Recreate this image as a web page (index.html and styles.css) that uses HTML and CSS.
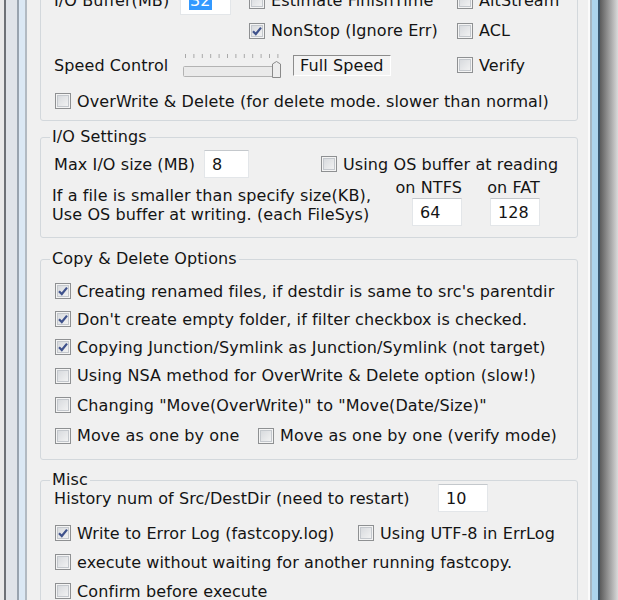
FILE: index.html
```html
<!DOCTYPE html>
<html lang="en">
<head>
<meta charset="utf-8">
<title>FastCopy Settings</title>
<link rel="stylesheet" href="styles.css">
</head>
<body>
<div class="window">
  <div class="frame-left"></div>
  <main class="client">
    <section class="group group-top">
      <div class="buf-cell"><span class="buf-label">I/O Buffer(MB)</span><span class="edit edit-buf"><span class="sel">32</span></span></div>
      <label class="chk"><span class="box"></span>Estimate FinishTime</label>
      <label class="chk"><span class="box"></span>AltStream</label>
      <span class="empty"></span>
      <label class="chk"><span class="box on"><svg viewBox="0 0 14 14"><path d="M3 7.2 L5.8 10 L11 3.6"/></svg></span>NonStop (Ignore Err)</label>
      <label class="chk"><span class="box"></span>ACL</label>
      <div class="speed-cell">
        <span class="speed-label">Speed Control</span>
        <svg class="slider" width="100" height="27" viewBox="0 0 100 27">
          <g class="ticks">
            <line x1="2.5" y1="2" x2="2.5" y2="6"/><line x1="10.9" y1="2" x2="10.9" y2="6"/>
            <line x1="19.3" y1="2" x2="19.3" y2="6"/><line x1="27.7" y1="2" x2="27.7" y2="6"/>
            <line x1="36.1" y1="2" x2="36.1" y2="6"/><line x1="44.5" y1="2" x2="44.5" y2="6"/>
            <line x1="52.9" y1="2" x2="52.9" y2="6"/><line x1="61.3" y1="2" x2="61.3" y2="6"/>
            <line x1="69.7" y1="2" x2="69.7" y2="6"/><line x1="78.1" y1="2" x2="78.1" y2="6"/>
            <line x1="86.5" y1="2" x2="86.5" y2="6"/><line x1="94.9" y1="2" x2="94.9" y2="6"/>
          </g>
          <rect class="track" x="0.5" y="14.5" width="92" height="10" rx="1"/>
          <path class="thumb" d="M89.5 12 L93.5 9.5 L97.5 12 V25.5 H89.5 Z"/>
        </svg>
        <span class="static">Full Speed</span>
      </div>
      <label class="chk"><span class="box"></span>Verify</label>
      <label class="chk span-all"><span class="box"></span>OverWrite &amp; Delete (for delete mode. slower than normal)</label>
    </section>

    <section class="group group-io">
      <div class="group-title">I/O Settings</div>
      <div class="row io-row1">
        <span class="io-label">Max I/O size (MB)</span>
        <span class="edit edit-io">8</span>
        <label class="chk io-osbuf"><span class="box"></span>Using OS buffer at reading</label>
      </div>
      <div class="row io-row2">
        <p class="io-text">If a file is smaller than specify size(KB),<br>Use OS buffer at writing. (each FileSys)</p>
        <div class="fs-cols">
          <div class="fs-col fs-ntfs"><span class="fs-head">on NTFS</span><span class="edit edit-fs">64</span></div>
          <div class="fs-col fs-fat"><span class="fs-head">on FAT</span><span class="edit edit-fs">128</span></div>
        </div>
      </div>
    </section>

    <section class="group group-cd">
      <div class="group-title">Copy &amp; Delete Options</div>
      <div class="cd-rows">
        <label class="chk"><span class="box on"><svg viewBox="0 0 14 14"><path d="M3 7.2 L5.8 10 L11 3.6"/></svg></span>Creating renamed files, if destdir is same to src's parentdir</label>
        <label class="chk"><span class="box on"><svg viewBox="0 0 14 14"><path d="M3 7.2 L5.8 10 L11 3.6"/></svg></span>Don't create empty folder, if filter checkbox is checked.</label>
        <label class="chk"><span class="box on"><svg viewBox="0 0 14 14"><path d="M3 7.2 L5.8 10 L11 3.6"/></svg></span>Copying Junction/Symlink as Junction/Symlink (not target)</label>
        <label class="chk"><span class="box"></span>Using NSA method for OverWrite &amp; Delete option (slow!)</label>
        <label class="chk"><span class="box"></span>Changing "Move(OverWrite)" to "Move(Date/Size)"</label>
        <div class="row">
          <label class="chk cd-move"><span class="box"></span>Move as one by one</label>
          <label class="chk"><span class="box"></span>Move as one by one (verify mode)</label>
        </div>
      </div>
    </section>

    <section class="group group-misc">
      <div class="group-title">Misc</div>
      <div class="row misc-row1">
        <span class="misc-label">History num of Src/DestDir (need to restart)</span>
        <span class="edit edit-fs">10</span>
      </div>
      <div class="row misc-row misc-row2">
        <label class="chk misc-log"><span class="box on"><svg viewBox="0 0 14 14"><path d="M3 7.2 L5.8 10 L11 3.6"/></svg></span>Write to Error Log (fastcopy.log)</label>
        <label class="chk"><span class="box"></span>Using UTF-8 in ErrLog</label>
      </div>
      <div class="row misc-row">
        <label class="chk"><span class="box"></span>execute without waiting for another running fastcopy.</label>
      </div>
      <div class="row misc-row">
        <label class="chk"><span class="box"></span>Confirm before execute</label>
      </div>
    </section>
  </main>
  <div class="frame-right"></div>
</div>
</body>
</html>
```

FILE: styles.css
```css
* { box-sizing: border-box; }
html, body { margin: 0; padding: 0; }
body {
  width: 618px;
  height: 600px;
  overflow: hidden;
  background: #e9e9e9;
  font-family: "DejaVu Sans", Verdana, sans-serif;
  font-size: 16px;
  letter-spacing: 0.1px;
  color: #141414;
}
.window { display: flex; height: 600px; }
.frame-left {
  width: 27px;
  flex: none;
  background: linear-gradient(to right,
    #e9e9e9 0 4px, #6d7176 4px 6px, #dfe3e8 6px 17px, #98a3ae 17px 19px,
    #dbe8f4 19px 25px, #b2bac2 25px 27px);
}
.client {
  width: 561px;
  flex: none;
  background: #f0f0f0;
  overflow: hidden;
}
.frame-right {
  width: 30px;
  flex: none;
  background: linear-gradient(to right,
    #fbfbfb 0 2px, #a7b5c2 2px 4px, #acd3ee 4px 10px, #3a5670 10px 12px,
    #5c5c5c 12px, #dadada 30px);
}

/* group boxes */
.group {
  margin: 0 10px 0 13px;
  border: 1px solid #d3d8dc;
  border-radius: 3px;
  padding: 0 12px 8px 13px;
}
.group-title {
  width: fit-content;
  margin: -10px 0 0 -4px;
  padding: 0 2px;
  height: 18px;
  line-height: 18px;
  background: #f0f0f0;
}
.row { display: flex; align-items: center; }

/* checkboxes */
.chk { display: flex; align-items: center; gap: 6px; white-space: nowrap; }
.box {
  width: 16px;
  height: 16px;
  flex: none;
  border: 1px solid #8e9092;
  background: linear-gradient(135deg, #d3d6da, #f6f6f6);
  box-shadow: inset 0 0 0 1px #f4f4f4, inset 0 0 0 2px #c4c8cd;
  display: flex;
}
.box svg { width: 14px; height: 14px; }
.box svg path { fill: none; stroke: #3f528c; stroke-width: 2.2; }

/* edits */
.edit {
  height: 28px;
  background: #fff;
  border: 1px solid #e3e6e9;
  border-top-color: #c4c8cc;
  padding: 0 7px;
  display: flex;
  align-items: center;
  flex: none;
}

/* top group */
.group-top {
  margin-top: -25px;
  padding-top: 10px;
  padding-bottom: 2px;
  display: grid;
  grid-template-columns: 195px 208px 1fr;
  grid-template-rows: 29px 31px 38px 34px;
  align-items: center;
}
.buf-cell { display: flex; align-items: center; }
.buf-label { width: 126px; flex: none; }
.edit-buf { width: 51px; padding-left: 8px; }
.sel { background: #3399ff; color: #fff; line-height: 18px; padding: 0 1px; }
.speed-cell { grid-column: span 2; display: flex; align-items: center; }
.speed-label { width: 129px; flex: none; }
.slider { flex: none; display: block; }
.ticks line { stroke: #a9a9a9; stroke-width: 1; }
.track { fill: #eaeaea; stroke: #b3b3b3; }
.thumb { fill: #ededed; stroke: #8a8a8a; }
.static {
  margin-left: 10px;
  width: 98px;
  height: 21px;
  line-height: 19px;
  padding-left: 6px;
  border: 1px solid #fff;
  border-top-color: #8c8c8c;
  border-left-color: #8c8c8c;
  background: #f3f3f3;
}
.span-all { grid-column: 1 / -1; margin-left: 1px; }

/* I/O settings */
.group-io { margin-top: 16px; padding-bottom: 11px; }
.io-row1 { margin-top: 4px; height: 28px; }
.io-label { width: 150px; flex: none; }
.edit-io { width: 45px; }
.io-osbuf { margin-left: 72px; }
.io-row2 { align-items: flex-start; height: 48px; }
.io-text { margin: 0 0 0 -2px; padding-top: 8px; line-height: 19px; white-space: nowrap; }
.fs-cols { display: flex; margin-left: auto; margin-right: 25px; }
.fs-col { display: flex; flex-direction: column; align-items: flex-end; }
.fs-ntfs { width: 80px; }
.fs-fat { width: 78px; }
.fs-head { line-height: 20px; height: 20px; }
.edit-fs { width: 50px; }

/* copy & delete */
.group-cd { margin-top: 21px; }
.cd-rows {
  margin-top: 9px;
  display: grid;
  grid-template-rows: 28px 28px 28px 29px 30px 31px;
  align-items: center;
  padding-left: 1px;
}
.cd-move { width: 203px; }

/* misc */
.group-misc { margin-top: 20px; }
.misc-row1 { margin-top: -5px; height: 28px; }
.misc-label { width: 384px; flex: none; }
.misc-row { height: 29px; padding-left: 1px; }
.misc-row2 { margin-top: 6.5px; }
.misc-log { width: 303px; }
```
